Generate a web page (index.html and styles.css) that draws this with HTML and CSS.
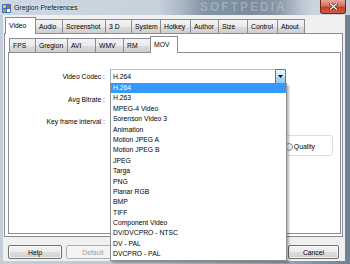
FILE: index.html
```html
<!DOCTYPE html>
<html>
<head>
<meta charset="utf-8">
<title>Gregion Preferences</title>
<link rel="stylesheet" href="styles.css">
</head>
<body>
<div class="window">
  <div class="titlebar">
    <svg class="app-icon" width="9" height="9" viewBox="0 0 9 9">
      <rect x="0" y="0" width="9" height="9" rx="1" fill="#3d6fb5"/>
      <rect x="1" y="1" width="3" height="3" fill="#f2c230"/>
      <rect x="5" y="1" width="3" height="3" fill="#e0572b"/>
      <rect x="1" y="5" width="3" height="3" fill="#6cc04a"/>
      <rect x="5" y="5" width="3" height="3" fill="#ffffff"/>
    </svg>
    <span class="title">Gregion Preferences</span>
    <span class="watermark">SOFTPEDIA</span>
    <button class="close" aria-label="Close">
      <svg width="9" height="7" viewBox="0 0 9 7">
        <path d="M1.5 0.8 L7.5 6.2 M7.5 0.8 L1.5 6.2" stroke="#3a1a14" stroke-width="2.4" stroke-linecap="square"/>
        <path d="M1.5 0.8 L7.5 6.2 M7.5 0.8 L1.5 6.2" stroke="#ffffff" stroke-width="1.3" stroke-linecap="square"/>
      </svg>
    </button>
  </div>

  <div class="client">
    <div class="tabs main-tabs">
      <div class="tab selected">Video</div>
      <div class="tab">Audio</div>
      <div class="tab">Screenshot</div>
      <div class="tab">3 D</div>
      <div class="tab">System</div>
      <div class="tab">Hotkey</div>
      <div class="tab">Author</div>
      <div class="tab">Size</div>
      <div class="tab">Control</div>
      <div class="tab">About</div>
    </div>

    <div class="tabpage">
      <div class="tabs sub-tabs">
        <div class="tab">FPS</div>
        <div class="tab">Gregion</div>
        <div class="tab">AVI</div>
        <div class="tab">WMV</div>
        <div class="tab">RM</div>
        <div class="tab selected">MOV</div>
      </div>

      <div class="subpage">
        <div class="form">
          <label class="lbl">Video Codec :</label>
          <div class="combo">
            <span class="combo-value">H.264</span>
            <span class="combo-btn">
              <svg width="5" height="3" viewBox="0 0 5 3"><polygon points="0,0 5,0 2.5,3" fill="#000"/></svg>
            </span>
            <ul class="listbox">
              <li class="active">H.264</li>
              <li>H.263</li>
              <li>MPEG-4 Video</li>
              <li>Sorenson Video 3</li>
              <li>Animation</li>
              <li>Motion JPEG A</li>
              <li>Motion JPEG B</li>
              <li>JPEG</li>
              <li>Targa</li>
              <li>PNG</li>
              <li>Planar RGB</li>
              <li>BMP</li>
              <li>TIFF</li>
              <li>Component Video</li>
              <li>DV/DVCPRO - NTSC</li>
              <li>DV - PAL</li>
              <li>DVCPRO - PAL</li>
            </ul>
          </div>

          <label class="lbl">Avg Bitrate :</label>
          <div class="field"></div>

          <label class="lbl">Key frame interval :</label>
          <div class="field"></div>
        </div>

        <div class="groupbox">
          <span class="radio checked"></span><span class="radio-label">Bitrate</span>
          <span class="radio"></span><span class="radio-label">Quality</span>
        </div>
      </div>
    </div>

    <div class="buttons">
      <button class="btn">Help</button>
      <button class="btn" disabled>Default</button>
      <span class="spacer"></span>
      <button class="btn btn-ok">OK</button>
      <button class="btn btn-cancel">Cancel</button>
    </div>
  </div>
</div>
</body>
</html>
```

FILE: styles.css
```css
* {
  box-sizing: border-box;
}

html, body {
  margin: 0;
  padding: 0;
}

body {
  width: 350px;
  height: 264px;
  overflow: hidden;
  font-family: "Liberation Sans", Arial, sans-serif;
  font-size: 6.8px;
  color: #000;
  background: linear-gradient(90deg, #c4cfda 0%, #bcc8d4 40%, #9aa9b7 80%, #6e8192 100%);
}

.window {
  display: flex;
  flex-direction: column;
  height: 264px;
}

/* ---------- title bar ---------- */
.titlebar {
  position: relative;
  height: 15px;
  flex: none;
  display: flex;
  align-items: center;
  padding-left: 2px;
  background: linear-gradient(90deg,
    #cdd7e1 0%, #c7d2dd 45%, #aab7c3 52%, #8495a4 58%,
    #7a8b9a 72%, #8a9aa8 80%, #bac6d1 86%, #cbd5df 90%, #c3ced9 100%);
  overflow: hidden;
}

.app-icon {
  flex: none;
  margin-top: 1px;
}

.title {
  margin-left: 3px;
  font-size: 6.9px;
  color: #111;
  text-shadow: 0 0 3px rgba(255, 255, 255, 0.9);
  position: relative;
  z-index: 1;
}

.watermark {
  position: absolute;
  left: 200px;
  top: 1px;
  font-size: 12px;
  line-height: 12px;
  font-weight: bold;
  letter-spacing: 2px;
  color: rgba(205, 215, 225, 0.4);
  filter: blur(0.5px);
}

.close {
  margin-left: auto;
  margin-right: 4px;
  align-self: flex-start;
  width: 26px;
  height: 14px;
  padding: 0;
  border: 1px solid #6e2a20;
  border-top: none;
  border-radius: 0 0 3px 3px;
  background: linear-gradient(180deg, #e6a79b 0%, #d7735f 45%, #c1402a 55%, #cf5a3d 100%);
  display: flex;
  align-items: center;
  justify-content: center;
  position: relative;
  z-index: 1;
}

/* ---------- client area ---------- */
.client {
  flex: none;
  margin-left: 3px;
  width: 342px;
  height: 246px;
  background: #f0f0f0;
  display: flex;
  flex-direction: column;
  padding-top: 2px;
}

/* tabs */
.tabs {
  display: grid;
  align-items: end;
  height: 16px;
  flex: none;
  position: relative;
  z-index: 2;
}

.main-tabs {
  margin-left: 2px;
  grid-template-columns: 30px 27px 43px 26px 29px 30px 28px 29px 30px 27px;
}

.sub-tabs {
  margin-left: 4px;
  grid-template-columns: 26px 32px 28px 28px 27px 27px;
}

.tab {
  height: 14px;
  margin-right: -1px;
  border: 1px solid #898c95;
  border-bottom: none;
  padding: 1px 0 0 3px;
  line-height: 11px;
  white-space: nowrap;
  background: linear-gradient(180deg, #f3f3f3 0%, #ebebeb 50%, #dddddd 52%, #cfcfcf 100%);
}

.tab.selected {
  height: 17px;
  margin-bottom: -1px;
  padding-top: 2px;
  background: #fff;
  position: relative;
  z-index: 2;
}

.tabpage {
  flex: none;
  margin-left: 1px;
  width: 339px;
  height: 204px;
  border: 1px solid #898c95;
  background: #fff;
  padding-top: 2px;
  padding-bottom: 2px;
  display: flex;
  flex-direction: column;
}

.subpage {
  flex: 1;
  margin-left: 3px;
  margin-right: 1px;
  border: 1px solid #898c95;
  background: #fff;
  padding-top: 16px;
}

/* form */
.form {
  display: grid;
  grid-template-columns: 96px 176px;
  grid-auto-rows: 15px;
  column-gap: 5px;
  row-gap: 7.5px;
}

.lbl {
  text-align: right;
  line-height: 15px;
  white-space: nowrap;
}

.combo {
  position: relative;
  display: flex;
  align-items: stretch;
  border: 1px solid #98b4cf;
  border-top-color: #a9c4dc;
  background: #fff;
  z-index: 5;
}

.combo-value {
  flex: 1;
  padding-left: 2px;
  line-height: 13px;
}

.combo-btn {
  width: 11px;
  margin: -1px -1px -1px 0;
  border: 1px solid #3c7fb1;
  border-radius: 1px;
  background: linear-gradient(180deg, #e7f5fd 0%, #cdebfc 45%, #a8d9f6 55%, #8fc9ee 100%);
  display: flex;
  align-items: center;
  justify-content: center;
}

.listbox {
  position: absolute;
  top: 100%;
  left: -1px;
  width: 177px;
  margin: 0;
  padding: 0;
  list-style: none;
  background: #fff;
  border: 1px solid #8e8f8f;
  border-top: none;
  box-shadow: 2px 2px 2px rgba(0, 0, 0, 0.28);
}

.listbox li {
  height: 10.4px;
  line-height: 10.4px;
  padding-left: 2px;
  white-space: nowrap;
}

.listbox li.active {
  background: #3399ff;
  color: #fff;
}

.field {
  width: 60px;
  border: 1px solid #abadb3;
  background: #fff;
}

/* group box */
.groupbox {
  margin-top: 6px;
  margin-left: 191px;
  width: 133px;
  height: 21px;
  border: 1px solid #d5dfe5;
  border-radius: 3px;
  display: flex;
  align-items: center;
  justify-content: flex-end;
  padding: 3px 17px 0 0;
  gap: 1px;
}

.radio {
  width: 8px;
  height: 8px;
  border-radius: 50%;
  border: 1px solid #8e8f8f;
  background: radial-gradient(circle at 50% 40%, #ffffff 0%, #e6e6e6 100%);
  flex: none;
}

.radio-label {
  margin-right: 6px;
  line-height: 10px;
}

.radio-label:last-child {
  margin-right: 0;
}

/* buttons */
.buttons {
  flex: none;
  display: flex;
  gap: 4px;
  margin-top: 8px;
  padding: 0 6px 0 5px;
  height: 14px;
}

.spacer {
  flex: 1;
}

.btn {
  width: 54px;
  height: 14px;
  padding: 0;
  font: inherit;
  color: #000;
  border: 1px solid #707070;
  border-radius: 2px;
  background: linear-gradient(180deg, #f2f2f2 0%, #ebebeb 50%, #dddddd 52%, #cfcfcf 100%);
  box-shadow: inset 0 0 0 1px rgba(255, 255, 255, 0.7);
}

.btn:disabled {
  color: #a0a0a0;
  border-color: #adb2b5;
  background: #f4f4f4;
  box-shadow: none;
}

.btn-ok,
.btn-cancel {
  width: 51px;
}

.btn-cancel {
  margin-left: -2px;
}
```
